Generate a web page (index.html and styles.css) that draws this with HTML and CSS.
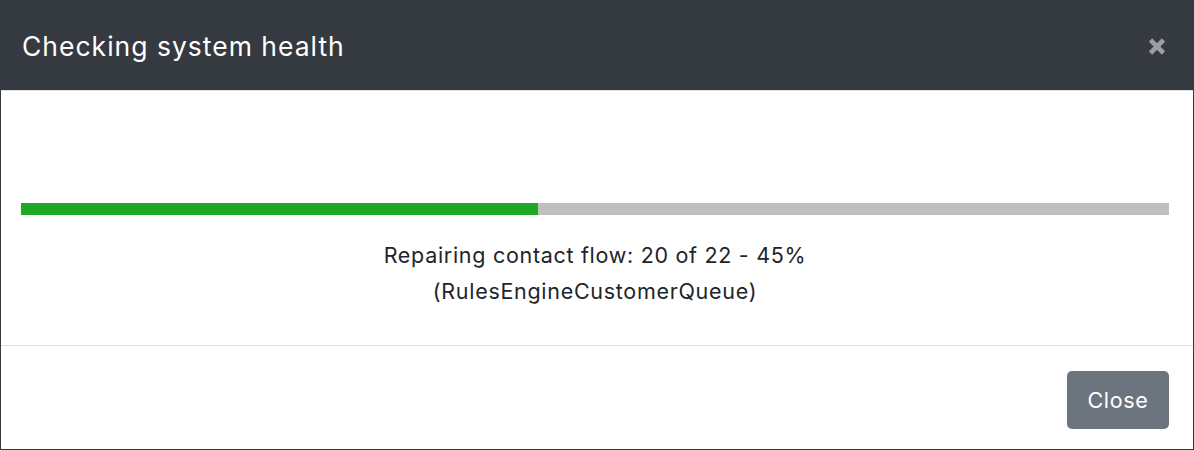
FILE: index.html
```html
<!DOCTYPE html>
<html>
<head>
<meta charset="utf-8">
<link rel="stylesheet" href="styles.css">
</head>
<body>
<div class="modal">
  <div class="modal-header">
    <h1 class="modal-title">Checking system health</h1>
    <button class="close" aria-label="Close">
      <svg width="18" height="19" viewBox="0 0 18 19"><path d="M2.5 3 L15.5 16 M15.5 3 L2.5 16" stroke="#9b9ea2" stroke-width="4.6" stroke-linecap="butt"/></svg>
    </button>
  </div>
  <div class="modal-body">
    <div class="progress"><div class="progress-bar" style="width:45%"></div></div>
    <p class="status">Repairing contact flow: 20 of 22 - 45%<br>(RulesEngineCustomerQueue)</p>
  </div>
  <div class="modal-footer">
    <button class="btn">Close</button>
  </div>
</div>
</body>
</html>
```

FILE: styles.css
```css
html, body {
  margin: 0;
  padding: 0;
  background: #ffffff;
}
body {
  font-family: Inter, "Noto Sans", sans-serif;
  color: #212529;
}
.modal {
  box-sizing: border-box;
  width: 1194px;
  height: 450px;
  border: 1px solid #343a40;
  display: flex;
  flex-direction: column;
}
.modal-header {
  box-sizing: border-box;
  height: 90px;
  background: #343a40;
  border-bottom: 1px solid #dee2e6;
  display: flex;
  align-items: center;
  justify-content: space-between;
  padding: 3px 27px 0 21px;
  flex: none;
}
.modal-title {
  margin: 0;
  font-size: 26.5px;
  letter-spacing: 1px;
  font-weight: 400;
  color: #ffffff;
  line-height: 1.2;
}
.close {
  border: 0;
  background: none;
  padding: 0;
  margin: -2px 0 0;
  display: flex;
}
.modal-body {
  box-sizing: border-box;
  height: 255px;
  padding: 112px 24px 0 20px;
  border-bottom: 1px solid #dee2e6;
  flex: none;
}
.progress {
  height: 12px;
  background: #bfbfbf;
  display: flex;
}
.progress-bar {
  background: #1fa824;
}
.status {
  margin: 22px 0 0;
  text-align: center;
  font-size: 21.5px;
  letter-spacing: 0.7px;
  line-height: 36px;
  color: #212529;
}
.modal-footer {
  flex: 1;
  display: flex;
  justify-content: flex-end;
  align-items: flex-start;
  padding: 25px 24px 0 0;
}
.btn {
  width: 102px;
  height: 58px;
  border: 0;
  border-radius: 5px;
  background: #6c757d;
  color: #ffffff;
  font-family: Inter, "Noto Sans", sans-serif;
  font-size: 21.5px;
  letter-spacing: 0.7px;
  padding: 0;
}
```
